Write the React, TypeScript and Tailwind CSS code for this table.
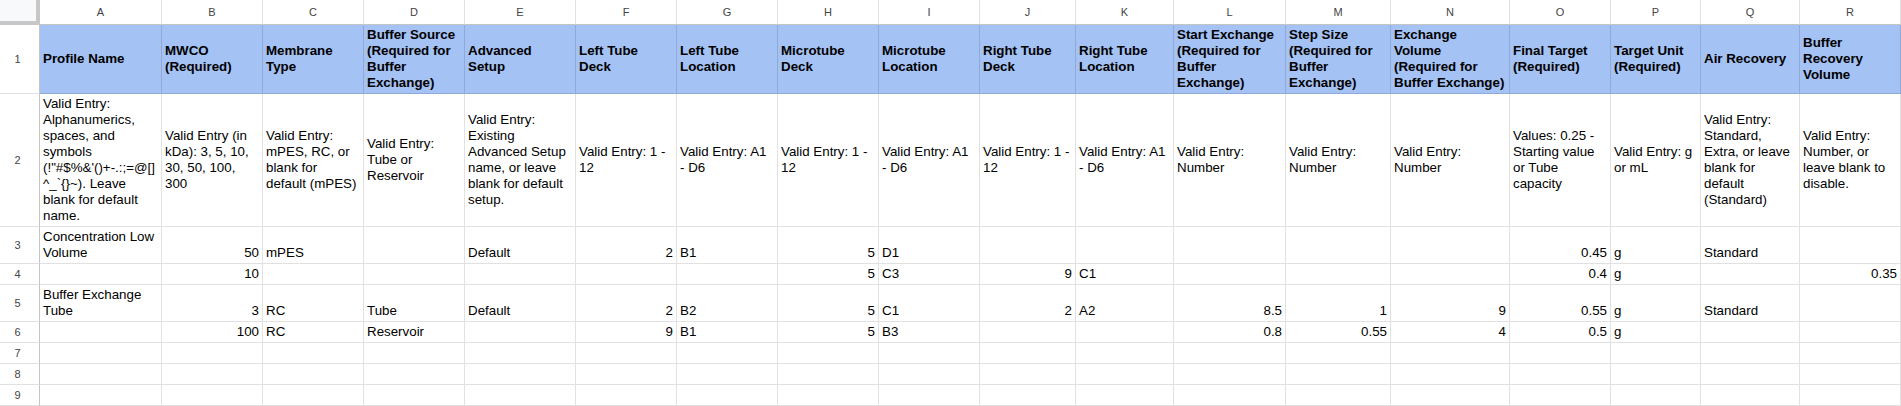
import React from 'react';

type Cell = { text?: React.ReactNode; num?: boolean };

const letters = ['A', 'B', 'C', 'D', 'E', 'F', 'G', 'H', 'I', 'J', 'K', 'L', 'M', 'N', 'O', 'P', 'Q', 'R'];

const headers = [
  'Profile Name',
  'MWCO (Required)',
  'Membrane Type',
  'Buffer Source (Required for Buffer Exchange)',
  'Advanced Setup',
  'Left Tube Deck',
  'Left Tube Location',
  'Microtube Deck',
  'Microtube Location',
  'Right Tube Deck',
  'Right Tube Location',
  'Start Exchange (Required for Buffer Exchange)',
  'Step Size (Required for Buffer Exchange)',
  'Exchange Volume (Required for Buffer Exchange)',
  'Final Target (Required)',
  'Target Unit (Required)',
  'Air Recovery',
  'Buffer Recovery Volume',
];

const hints: React.ReactNode[] = [
  <>
    Valid Entry: Alphanumerics, spaces, and symbols
    <br />
    <span className="break-all">(!"#$%&amp;'()+-.:;=@[]^_`{'{}'}~).</span> Leave blank for default name.
  </>,
  'Valid Entry (in kDa): 3, 5, 10, 30, 50, 100, 300',
  'Valid Entry: mPES, RC, or blank for default (mPES)',
  'Valid Entry: Tube or Reservoir',
  'Valid Entry: Existing Advanced Setup name, or leave blank for default setup.',
  'Valid Entry: 1 - 12',
  'Valid Entry: A1 - D6',
  'Valid Entry: 1 - 12',
  'Valid Entry: A1 - D6',
  'Valid Entry: 1 - 12',
  'Valid Entry: A1 - D6',
  'Valid Entry: Number',
  'Valid Entry: Number',
  'Valid Entry: Number',
  'Values: 0.25 - Starting value or Tube capacity',
  'Valid Entry: g or mL',
  'Valid Entry: Standard, Extra, or leave blank for default (Standard)',
  'Valid Entry: Number, or leave blank to disable.',
];

const t = (text: string): Cell => ({ text });
const n = (text: string): Cell => ({ text, num: true });
const e: Cell = {};

const rows: Cell[][] = [
  [t('Concentration Low Volume'), n('50'), t('mPES'), e, t('Default'), n('2'), t('B1'), n('5'), t('D1'), e, e, e, e, e, n('0.45'), t('g'), t('Standard'), e],
  [e, n('10'), e, e, e, e, e, n('5'), t('C3'), n('9'), t('C1'), e, e, e, n('0.4'), t('g'), e, n('0.35')],
  [t('Buffer Exchange Tube'), n('3'), t('RC'), t('Tube'), t('Default'), n('2'), t('B2'), n('5'), t('C1'), n('2'), t('A2'), n('8.5'), n('1'), n('9'), n('0.55'), t('g'), t('Standard'), e],
  [e, n('100'), t('RC'), t('Reservoir'), e, n('9'), t('B1'), n('5'), t('B3'), e, e, n('0.8'), n('0.55'), n('4'), n('0.5'), t('g'), e, e],
  Array(18).fill(e),
  Array(18).fill(e),
  Array(18).fill(e),
];

function RowNum({ children }: { children: React.ReactNode }) {
  return (
    <div className="flex items-center justify-center pr-[4px] border-r border-b border-r-[#c4c4c4] border-b-[#e1e1e1] text-[11px] text-[#444]">
      {children}
    </div>
  );
}

export default function App() {
  return (
    <div className="w-[1901px] h-[406px] overflow-hidden bg-white font-['Liberation_Sans',Arial,sans-serif] text-black">
      <div className="grid grid-cols-[40px_122px_101px_101px_101px_111px_101px_101px_101px_101px_96px_98px_112px_105px_119px_101px_90px_99px_101px] grid-rows-[25px_69px_133px_37px_21px_37px_21px_21px_21px_21px]">
        {/* corner */}
        <div className="bg-[#f8f9fa] border-r-4 border-b-4 border-[#c7c7c7]" />
        {letters.map((l) => (
          <div
            key={l}
            className="flex items-center justify-center border-r border-b border-r-[#e1e1e1] border-b-[#c4c4c4] text-[11px] text-[#444]"
          >
            {l}
          </div>
        ))}

        {/* row 1: headers */}
        <RowNum>1</RowNum>
        {headers.map((h) => (
          <div
            key={h}
            className="flex items-center px-[3px] bg-[#a4c2f4] border-r border-b border-[#8fa9d8] text-[13.33px] leading-[16px] font-bold"
          >
            <span className="break-words min-w-0">{h}</span>
          </div>
        ))}

        {/* row 2: hints */}
        <RowNum>2</RowNum>
        {hints.map((h, i) => (
          <div
            key={i}
            className="flex items-center px-[3px] border-r border-b border-[#e1e1e1] text-[13.33px] leading-[16px]"
          >
            <span className="break-words min-w-0">{h}</span>
          </div>
        ))}

        {/* data rows */}
        {rows.map((row, r) => (
          <React.Fragment key={r}>
            <RowNum>{r + 3}</RowNum>
            {row.map((c, i) => (
              <div
                key={i}
                className={
                  c.num
                    ? 'flex items-end justify-end text-right px-[3px] pb-[2px] border-r border-b border-[#e1e1e1] text-[13.33px] leading-[16px]'
                    : 'flex items-end px-[3px] pb-[2px] border-r border-b border-[#e1e1e1] text-[13.33px] leading-[16px]'
                }
              >
                <span className="min-w-0">{c.text}</span>
              </div>
            ))}
          </React.Fragment>
        ))}
      </div>
    </div>
  );
}
